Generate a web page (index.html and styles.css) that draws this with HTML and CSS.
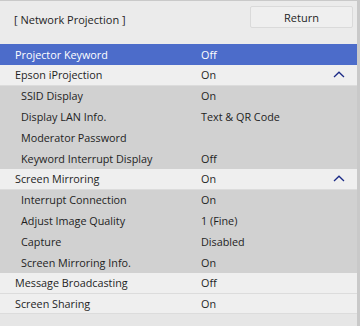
FILE: index.html
```html
<!DOCTYPE html>
<html lang="en">
<head>
    <meta charset="UTF-8">
    <meta name="viewport" content="width=device-width, initial-scale=1.0">
    <title>Network Projection</title>
    <link rel="stylesheet" href="styles.css">
</head>
<body>
    <div class="panel">
        <div class="header">
            <span class="title">[ Network Projection ]</span>
            <button class="btn" type="button">Return</button>
        </div>
        <div class="menu">
            <div class="row main selected"><span class="label">Projector Keyword</span><span class="value">Off</span></div>
            <div class="row main"><span class="label">Epson iProjection</span><span class="value">On</span>
                <svg class="chevron" width="12" height="7" viewBox="0 0 12 7"><polyline points="1,6 6,1.2 11,6" fill="none" stroke="#1b2a86" stroke-width="1.3"/></svg>
            </div>
            <div class="row sub"><span class="label">SSID Display</span><span class="value">On</span></div>
            <div class="row sub"><span class="label">Display LAN Info.</span><span class="value">Text &amp; QR Code</span></div>
            <div class="row sub"><span class="label">Moderator Password</span><span class="value"></span></div>
            <div class="row sub"><span class="label">Keyword Interrupt Display</span><span class="value">Off</span></div>
            <div class="row main"><span class="label">Screen Mirroring</span><span class="value">On</span>
                <svg class="chevron" width="12" height="7" viewBox="0 0 12 7"><polyline points="1,6 6,1.2 11,6" fill="none" stroke="#1b2a86" stroke-width="1.3"/></svg>
            </div>
            <div class="row sub"><span class="label">Interrupt Connection</span><span class="value">On</span></div>
            <div class="row sub"><span class="label">Adjust Image Quality</span><span class="value">1 (Fine)</span></div>
            <div class="row sub"><span class="label">Capture</span><span class="value">Disabled</span></div>
            <div class="row sub"><span class="label">Screen Mirroring Info.</span><span class="value">On</span></div>
            <div class="row main"><span class="label">Message Broadcasting</span><span class="value">Off</span></div>
            <div class="row main"><span class="label">Screen Sharing</span><span class="value">On</span></div>
            <div class="row empty"></div>
        </div>
    </div>
</body>
</html>
```

FILE: styles.css
```css
body {
    margin: 0;
    padding: 0;
    background-color: #c9c9c9;
    font-family: "Open Sans", "Noto Sans", sans-serif;
    font-size: 10.8px;
    font-weight: 500;
    color: #1e1e1e;
    height: 326px;
    overflow: hidden;
}

.panel {
    width: 357px;
    margin-top: 1px;
    background-color: #ebebeb;
}

.header {
    display: flex;
    justify-content: space-between;
    align-items: flex-start;
    height: 43px;
    padding-left: 14px;
    padding-right: 4px;
}

.title {
    margin-top: 11px;
    font-size: 11px;
}

.btn {
    margin-top: 5px;
    width: 103px;
    height: 22px;
    background-color: #efefef;
    border: 1px solid #dadada;
    border-radius: 2px;
    font-family: inherit;
    font-size: 11px;
    font-weight: 500;
    color: #1e1e1e;
    padding: 0;
}

.row {
    box-sizing: border-box;
    display: flex;
    align-items: center;
    height: 20.8px;
}

.row .label {
    width: 186px;
    padding-left: 15px;
}

.row .value {
    flex: 1;
}

.main {
    background-color: #efefef;
    border-bottom: 1px solid #dcdcdc;
}

.sub {
    background-color: #d1d1d1;
}

.sub .label {
    padding-left: 21px;
    width: 180px;
}

.selected {
    background-color: #4c6cca;
    color: #fff;
    border-bottom: none;
}

.empty {
    background-color: #e6e6e6;
}

.chevron {
    margin-right: 12px;
}
```
